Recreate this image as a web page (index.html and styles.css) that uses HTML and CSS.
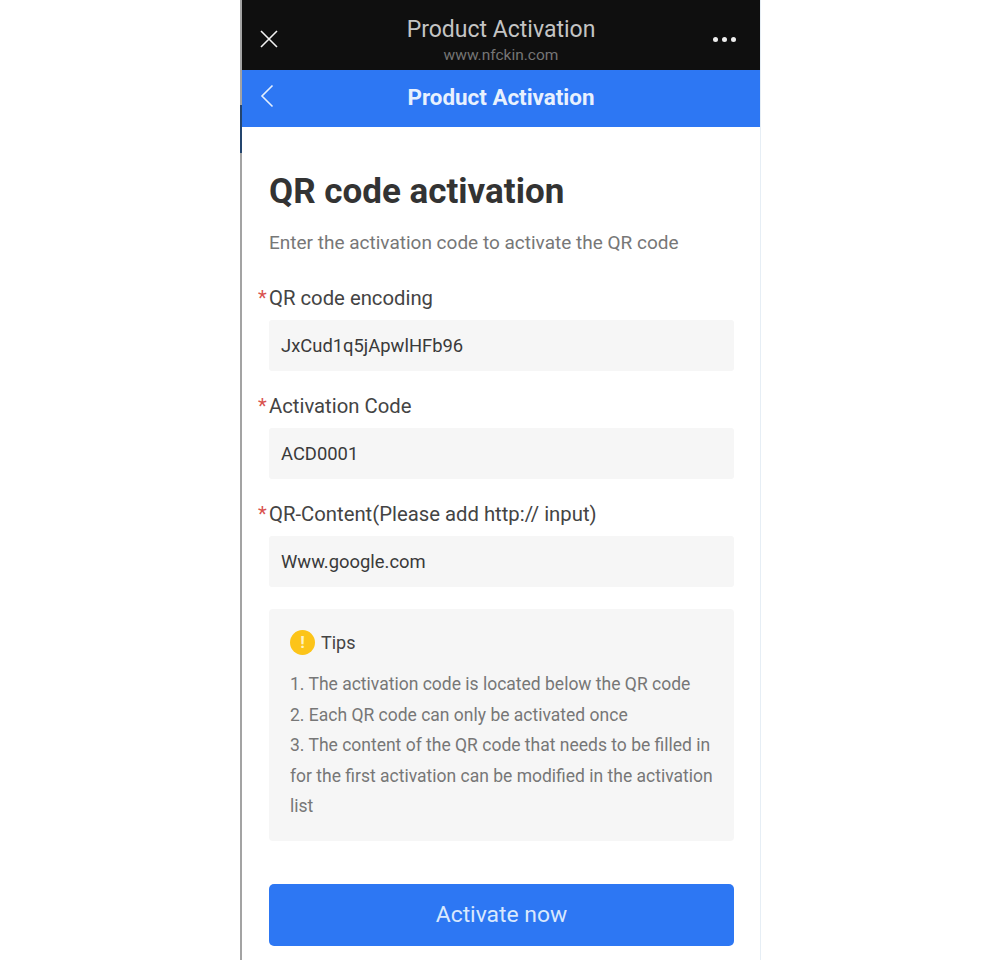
FILE: index.html
```html
<!DOCTYPE html>
<html lang="en">
<head>
    <meta charset="UTF-8">
    <title>Product Activation</title>
    <link rel="stylesheet" href="styles.css">
</head>
<body>
    <div class="phone">
        <!--browser bar-->
        <div class="top-bar">
            <svg class="close-icon" width="20" height="20" viewBox="0 0 20 20"><path d="M2 2L18 18M18 2L2 18" stroke="#f2f2f2" stroke-width="1.6" fill="none"/></svg>
            <div class="top-title">
                <div class="top-name">Product Activation</div>
                <div class="top-url">www.nfckin.com</div>
            </div>
            <div class="more-icon"><span></span><span></span><span></span></div>
        </div>
        <!--page header-->
        <div class="nav-bar">
            <svg class="back-icon" width="14" height="24" viewBox="0 0 14 24"><path d="M12.5 1.5L2 12L12.5 22.5" stroke="#e4effd" stroke-width="1.6" fill="none"/></svg>
            <span class="nav-title">Product Activation</span>
        </div>

        <div class="content">
            <h1 class="title">QR code activation</h1>
            <p class="sub-title">Enter the activation code to activate the QR code</p>

            <div class="field">
                <label class="field-label">QR code encoding</label>
                <div class="field-input">JxCud1q5jApwlHFb96</div>
            </div>
            <div class="field">
                <label class="field-label">Activation Code</label>
                <div class="field-input">ACD0001</div>
            </div>
            <div class="field">
                <label class="field-label">QR-Content(Please add http:// input)</label>
                <div class="field-input">Www.google.com</div>
            </div>

            <!--tips-->
            <div class="tips">
                <div class="tips-head">
                    <span class="tips-icon">!</span>
                    <span>Tips</span>
                </div>
                <ol class="tips-list">
                    <li>1. The activation code is located below the QR code</li>
                    <li>2. Each QR code can only be activated once</li>
                    <li>3. The content of the QR code that needs to be filled in for the first activation can be modified in the activation list</li>
                </ol>
            </div>

            <button class="submit-btn">Activate now</button>
        </div>
    </div>
</body>
</html>
```

FILE: styles.css
```css
* {
    margin: 0;
    padding: 0;
    box-sizing: border-box;
}
html, body {
    height: 960px;
    overflow: hidden;
    background: #fff;
}
body {
    font-family: Roboto, "Noto Sans", "Liberation Sans", sans-serif;
    color: #333;
}
.phone {
    position: relative;
    margin-left: 240px;
    width: 521px;
    height: 960px;
    border-left: 2px solid #a3a3a3;
    border-right: 1px solid #e6eef5;
    background: #fff;
}
/* dark strip on the screen edge */
.phone::before {
    content: "";
    position: absolute;
    left: -2px;
    top: 105px;
    width: 2px;
    height: 48px;
    background: #24456e;
}

.top-bar {
    display: flex;
    align-items: center;
    justify-content: space-between;
    height: 70px;
    padding: 8px 24px 0 17px;
    background: #0f0f0f;
}
.close-icon {
    display: block;
}
.top-title {
    text-align: center;
    margin-left: 10px;
    margin-top: 2px;
}
.top-name {
    font-size: 23px;
    line-height: 30px;
    color: #c4c4c4;
}
.top-url {
    font-size: 15.5px;
    line-height: 20px;
    color: #757575;
}
.more-icon {
    display: flex;
    gap: 4px;
}
.more-icon span {
    width: 5px;
    height: 5px;
    border-radius: 50%;
    background: #eee;
}

.nav-bar {
    position: relative;
    height: 57px;
    line-height: 55px;
    text-align: center;
    background: #2d77f3;
}
.back-icon {
    position: absolute;
    left: 18px;
    top: 14px;
}
.nav-title {
    font-size: 22.4px;
    font-weight: 700;
    color: #e8f1fe;
}

.content {
    padding: 0 26px 0 27px;
}
.title {
    margin-top: 44px;
    font-size: 35px;
    line-height: 42px;
    font-weight: 700;
    color: #333;
}
.sub-title {
    margin-top: 18px;
    font-size: 19px;
    line-height: 24px;
    color: #777;
}

.field {
    margin-top: 30px;
}
.field + .field {
    margin-top: 22px;
}
.field-label {
    position: relative;
    display: block;
    font-size: 20.3px;
    line-height: 26px;
    color: #444;
}
.field-label::before {
    content: "*";
    position: absolute;
    left: -11px;
    top: 0;
    color: #d9534f;
}
.field-input {
    margin-top: 9px;
    height: 51px;
    padding-left: 12px;
    font-size: 18.4px;
    line-height: 51px;
    color: #3a3a3a;
    background: #f6f6f6;
    border-radius: 3px;
}

.tips {
    margin-top: 22px;
    height: 232px;
    padding: 21px 20px 0 21px;
    background: #f6f6f6;
    border-radius: 4px;
}
.tips-head {
    display: flex;
    align-items: center;
    gap: 6px;
    font-size: 18px;
    line-height: 25px;
    color: #444;
}
.tips-icon {
    width: 25px;
    height: 25px;
    line-height: 25px;
    text-align: center;
    font-size: 17px;
    font-weight: 700;
    color: #fff3c4;
    background: #fcc419;
    border-radius: 50%;
}
.tips-list {
    margin-top: 14px;
    list-style: none;
    font-size: 17.5px;
    line-height: 30.5px;
    color: #777;
}

.submit-btn {
    display: block;
    width: 100%;
    height: 62px;
    margin-top: 43px;
    padding-bottom: 2px;
    border: 0;
    border-radius: 5px;
    font-family: inherit;
    font-size: 22.9px;
    color: #d9e8fd;
    background: #2d77f3;
}
```
